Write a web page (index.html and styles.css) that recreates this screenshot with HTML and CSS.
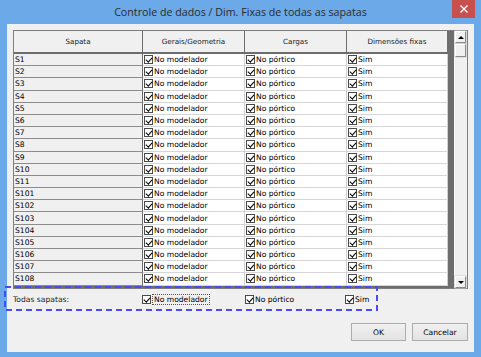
FILE: index.html
```html
<!DOCTYPE html>
<html lang="pt">
<head>
  <meta charset="UTF-8">
  <title>Controle de dados</title>
  <link rel="stylesheet" href="styles.css">
</head>
<body>
  <div class="window">
    <div class="titlebar">
      <span></span>
      <span class="title">Controle de dados / Dim. Fixas de todas as sapatas</span>
      <span class="close">
        <svg width="8" height="8" viewBox="0 0 8 8"><path d="M0.5 0.5 L7.5 7.5 M7.5 0.5 L0.5 7.5" stroke="#fff" stroke-width="1.3"/></svg>
      </span>
    </div>
    <div class="client">
      <div class="grid">
        <div class="table">
          <div class="row head">
            <div class="cell">Sapata</div>
            <div class="cell">Gerais/Geometria</div>
            <div class="cell">Cargas</div>
            <div class="cell">Dimensões fixas</div>
          </div>
          <div id="rows"></div>
        </div>
        <div class="scrollbar">
          <div class="sb-btn"><span class="arrow-up"></span></div>
          <div class="sb-thumb"></div>
          <div class="sb-track"></div>
          <div class="sb-btn"><span class="arrow-down"></span></div>
        </div>
      </div>
      <div class="all-row">
        <span class="label">Todas sapatas:</span>
        <span class="check"><span class="cb big"></span><span class="focus">No modelador</span></span>
        <span class="check"><span class="cb big"></span>No pórtico</span>
        <span class="check"><span class="cb big"></span>Sim</span>
      </div>
      <div class="buttons">
        <button class="btn">OK</button>
        <button class="btn">Cancelar</button>
      </div>
    </div>
    <svg class="mark" width="378" height="26"><rect x="5" y="1" width="372" height="23" fill="none" stroke="#4a4af2" stroke-width="2" stroke-dasharray="6 4"/></svg>
  </div>

  <script>
    var names = ["S1", "S2", "S3", "S4", "S5", "S6", "S7", "S8", "S9", "S10", "S11",
                 "S101", "S102", "S103", "S104", "S105", "S106", "S107", "S108"];
    var html = "";
    names.forEach(function (n) {
      html += '<div class="row">' +
        '<div class="cell name">' + n + '</div>' +
        '<div class="cell data"><span class="cb"></span>No modelador</div>' +
        '<div class="cell data"><span class="cb"></span>No pórtico</div>' +
        '<div class="cell data"><span class="cb"></span>Sim</div>' +
        '</div>';
    });
    document.getElementById("rows").innerHTML = html;
  </script>
</body>
</html>
```

FILE: styles.css
```css
* { margin: 0; padding: 0; box-sizing: border-box; }
body { font-family: "DejaVu Sans", Verdana, sans-serif; font-size: 7.6px; color: #000; background: #6ba9e8; }
.window { width: 481px; height: 357px; background: #6ba9e8; display: flex; flex-direction: column; position: relative; }

.titlebar { height: 24px; display: grid; grid-template-columns: 1fr auto 1fr; }
.title { font-family: "Open Sans", "Noto Sans", sans-serif; font-size: 10.7px; color: #2b2b2b; line-height: 24px; }
.close { justify-self: end; width: 23px; height: 18px; margin-right: 6px; background: #c7504e; display: flex; align-items: center; justify-content: center; }

.client { flex: 1; margin: 0 7px 5px 7px; background: #f0f0f0; padding: 6px 6px 0 6px; }

.grid { height: 259px; border: 1px solid #7e7e7e; background: #6d6d6d; display: flex; }
.table { width: 434px; }
.row { display: grid; grid-template-columns: 129px 102px 102px 101px; height: 12.2px; }
.row.head { height: 23px; }
.cell { display: flex; align-items: center; white-space: nowrap; overflow: hidden; border-right: 1px solid #d0d0d0; border-bottom: 1px solid #d6d6d6; }
.head .cell { justify-content: center; background: #f0f0f0; border-right: 1px solid #6d6d6d; border-bottom: 2px solid #6d6d6d; color: #222; font-size: 7.2px; }
.cell.name { background: #f0f0f0; border-right: 1px solid #6d6d6d; border-bottom: 1px solid #8c8c8c; padding-left: 1px; }
.cell.data { background: #fff; padding-left: 1px; }

.cb { width: 9px; height: 9px; border: 1px solid #4a4a4a; background: #fff; position: relative; flex-shrink: 0; margin-right: 1px; }
.cb::after { content: ""; position: absolute; left: 2px; top: 0; width: 2.5px; height: 5px; border: solid #000; border-width: 0 1.6px 1.6px 0; transform: rotate(42deg); }

.scrollbar { width: 13px; margin-left: auto; background: #f0f0f0; display: flex; flex-direction: column; padding-right: 1px; border-left: 1px solid #fafafa; }
.sb-btn, .sb-thumb { height: 12px; border: 1px solid; border-color: #fff #8a8a8a #8a8a8a #fff; background: #f0f0f0; display: flex; align-items: center; justify-content: center; box-shadow: 0 0 0 0.5px #c8c8c8; }
.sb-thumb { height: 13px; margin-top: 1px; }
.sb-track { flex: 1; }
.arrow-up { width: 0; height: 0; border-left: 3px solid transparent; border-right: 3px solid transparent; border-bottom: 3px solid #000; }
.arrow-down { width: 0; height: 0; border-left: 3px solid transparent; border-right: 3px solid transparent; border-top: 3px solid #000; }

.all-row { display: grid; grid-template-columns: 129px 103px 100px auto; height: 14px; margin-top: 3px; align-items: center; }
.label { color: #222; }
.check { display: flex; align-items: center; }
.cb.big { margin-right: 1px; }
.focus { border: 1px dotted #555; padding: 0 1px; line-height: 9px; }

.buttons { display: flex; justify-content: flex-end; gap: 6px; margin-top: 17px; }
.btn { width: 55px; height: 18px; font-family: "DejaVu Sans", Verdana, sans-serif; font-size: 7.6px; color: #000; border: 1px solid #acacac; background: linear-gradient(#f0f0f0, #e3e3e3); }
.btn + .btn { width: 56px; }

.mark { position: absolute; left: 0; top: 286px; }
```
